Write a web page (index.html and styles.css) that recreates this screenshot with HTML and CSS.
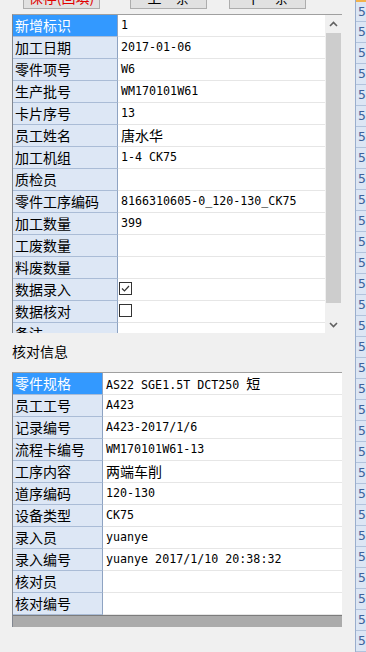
FILE: index.html
```html
<!DOCTYPE html>
<html lang="zh-CN">
<head>
    <meta charset="UTF-8">
    <meta name="viewport" content="width=device-width, initial-scale=1.0">
    <title>加工记录核对</title>
    <link rel="stylesheet" href="styles.css">
</head>
<body>
    <div class="screen">
        <div class="main">
            <div class="toolbar">
                <button class="btn btn-save">保存(回填)</button>
                <button class="btn btn-prev">上一条</button>
                <button class="btn btn-next">下一条</button>
            </div>

            <!-- 录入信息 -->
            <div class="grid grid-entry">
                <div class="rows">
                    <div class="row"><div class="label selected">新增标识</div><div class="value">1</div></div>
                    <div class="row"><div class="label">加工日期</div><div class="value">2017-01-06</div></div>
                    <div class="row"><div class="label">零件项号</div><div class="value">W6</div></div>
                    <div class="row"><div class="label">生产批号</div><div class="value">WM170101W61</div></div>
                    <div class="row"><div class="label">卡片序号</div><div class="value">13</div></div>
                    <div class="row"><div class="label">员工姓名</div><div class="value"><span class="cn">唐水华</span></div></div>
                    <div class="row"><div class="label">加工机组</div><div class="value">1-4 CK75</div></div>
                    <div class="row"><div class="label">质检员</div><div class="value"></div></div>
                    <div class="row"><div class="label">零件工序编码</div><div class="value">8166310605-0_120-130_CK75</div></div>
                    <div class="row"><div class="label">加工数量</div><div class="value">399</div></div>
                    <div class="row"><div class="label">工废数量</div><div class="value"></div></div>
                    <div class="row"><div class="label">料废数量</div><div class="value"></div></div>
                    <div class="row">
                        <div class="label">数据录入</div>
                        <div class="value"><span class="check"><svg width="11" height="11" viewBox="0 0 11 11"><path d="M2 5.5 L4.5 8 L9 3" fill="none" stroke="#333" stroke-width="1.2"/></svg></span></div>
                    </div>
                    <div class="row"><div class="label">数据核对</div><div class="value"><span class="check"></span></div></div>
                    <div class="row"><div class="label">备注</div><div class="value"></div></div>
                </div>
                <div class="vscroll">
                    <div class="arrow">
                        <svg width="9" height="6" viewBox="0 0 9 6"><path d="M1 5 L4.5 1.5 L8 5" fill="none" stroke="#606060" stroke-width="1.6"/></svg>
                    </div>
                    <div class="thumb"></div>
                    <div class="track"></div>
                    <div class="arrow">
                        <svg width="9" height="6" viewBox="0 0 9 6"><path d="M1 1 L4.5 4.5 L8 1" fill="none" stroke="#606060" stroke-width="1.6"/></svg>
                    </div>
                </div>
            </div>

            <div class="section-title">核对信息</div>

            <!-- 核对信息 -->
            <div class="grid grid-check">
                <div class="rows">
                    <div class="row"><div class="label selected">零件规格</div><div class="value">AS22 SGE1.5T DCT250 <span class="cn">短</span></div></div>
                    <div class="row"><div class="label">员工工号</div><div class="value">A423</div></div>
                    <div class="row"><div class="label">记录编号</div><div class="value">A423-2017/1/6</div></div>
                    <div class="row"><div class="label">流程卡编号</div><div class="value">WM170101W61-13</div></div>
                    <div class="row"><div class="label">工序内容</div><div class="value"><span class="cn">两端车削</span></div></div>
                    <div class="row"><div class="label">道序编码</div><div class="value">120-130</div></div>
                    <div class="row"><div class="label">设备类型</div><div class="value">CK75</div></div>
                    <div class="row"><div class="label">录入员</div><div class="value">yuanye</div></div>
                    <div class="row"><div class="label">录入编号</div><div class="value">yuanye 2017/1/10 20:38:32</div></div>
                    <div class="row"><div class="label">核对员</div><div class="value"></div></div>
                    <div class="row"><div class="label">核对编号</div><div class="value"></div></div>
                </div>
                <div class="hscroll"></div>
            </div>
        </div>

        <div class="side">
            <div class="side-cell current">5</div>
            <div class="side-cell">5</div>
            <div class="side-cell">5</div>
            <div class="side-cell">5</div>
            <div class="side-cell">5</div>
            <div class="side-cell">5</div>
            <div class="side-cell">5</div>
            <div class="side-cell">5</div>
            <div class="side-cell">5</div>
            <div class="side-cell">5</div>
            <div class="side-cell">5</div>
            <div class="side-cell">5</div>
            <div class="side-cell">5</div>
            <div class="side-cell">5</div>
            <div class="side-cell">5</div>
            <div class="side-cell">5</div>
            <div class="side-cell">5</div>
            <div class="side-cell">5</div>
            <div class="side-cell">5</div>
            <div class="side-cell">5</div>
            <div class="side-cell">5</div>
            <div class="side-cell">5</div>
            <div class="side-cell">5</div>
            <div class="side-cell">5</div>
            <div class="side-cell">5</div>
            <div class="side-cell">5</div>
            <div class="side-cell">5</div>
            <div class="side-cell">5</div>
            <div class="side-cell">5</div>
            <div class="side-cell">5</div>
            <div class="side-cell">5</div>
        </div>
    </div>
</body>
</html>
```

FILE: styles.css
```css
body {
    margin: 0;
    background: #f0f0f0;
    font-family: "Noto Sans CJK SC", "Noto Sans", sans-serif;
    font-size: 14px;
    color: #000;
    overflow: hidden;
}

.screen {
    display: flex;
    height: 652px;
}

.main {
    width: 355px;
    padding: 0 13px 0 12px;
    box-sizing: border-box;
    flex-shrink: 0;
}

/* toolbar, only the bottom edge is on screen */
.toolbar {
    height: 9px;
    overflow: hidden;
    display: flex;
    align-items: flex-end;
    margin-bottom: 5px;
}

.btn {
    flex-shrink: 0;
    width: 77px;
    height: 24px;
    padding: 0;
    line-height: 20px;
    border: 1px solid #adadad;
    background: #e1e1e1;
    font-family: "Noto Sans CJK SC", sans-serif;
    font-size: 14px;
    color: #000;
}

.btn-save { margin-left: 11px; color: #e00000; }
.btn-prev { margin-left: 30px; }
.btn-next { margin-left: 22px; }

/* property grids */
.grid {
    border-top: 1px solid #a0a0a0;
    border-left: 1px solid #828790;
    background: #fff;
}

.grid-entry {
    display: flex;
    height: 319px;
    box-sizing: border-box;
}

.grid-entry .rows {
    flex: 1;
    overflow: hidden;
}

.row {
    display: flex;
    height: 22px;
}

.label {
    width: 105px;
    flex-shrink: 0;
    box-sizing: border-box;
    padding-left: 2px;
    line-height: 21px;
    background: #dde7f5;
    border-right: 1px solid #8ea3c2;
    border-bottom: 1px solid #aabcd6;
    white-space: nowrap;
    overflow: hidden;
}

.label.selected {
    background: #3399ff;
    color: #fff;
}

.grid-check .label {
    width: 90px;
}

.value {
    flex: 1;
    min-width: 0;
    padding-left: 3px;
    line-height: 21px;
    border-bottom: 1px solid #e6e6e6;
    font-family: "DejaVu Sans Mono", "Noto Sans CJK SC", monospace;
    font-size: 11.67px;
    white-space: nowrap;
    overflow: hidden;
}

.cn {
    font-family: "Noto Sans CJK SC", sans-serif;
    font-size: 14px;
}

.check {
    display: inline-block;
    vertical-align: middle;
    width: 11px;
    height: 11px;
    margin: -2px 0 0 -2px;
    border: 1px solid #333;
    background: #fff;
    line-height: 0;
}

.vscroll {
    width: 17px;
    flex-shrink: 0;
    display: flex;
    flex-direction: column;
    background: #f0f0f0;
}

.vscroll .arrow {
    height: 17px;
    display: flex;
    align-items: center;
    justify-content: center;
}

.vscroll .thumb {
    height: 270px;
    margin: 1px 1px 0;
    background: #cdcdcd;
}

.vscroll .track {
    flex: 1;
}

.section-title {
    padding-top: 8px;
    height: 20px;
    line-height: 20px;
    margin-bottom: 11px;
}

.hscroll {
    height: 12px;
    box-sizing: border-box;
    border-top: 1px solid #7c7c7c;
    background: #ababab;
}

/* row headers of the next panel, cut by the window */
.side {
    flex: 1;
    border-left: 1px solid #9aaecd;
    overflow: hidden;
}

.side-cell {
    height: 21px;
    box-sizing: border-box;
    padding-left: 2px;
    line-height: 20px;
    background: #dce6f4;
    border-bottom: 1px solid #b2c3dc;
    color: #3d639c;
    font-family: "DejaVu Sans Mono", monospace;
    font-size: 13px;
    white-space: nowrap;
}

.side-cell.current {
    border-top: 2px solid #f2b24c;
    height: 22px;
}
```
